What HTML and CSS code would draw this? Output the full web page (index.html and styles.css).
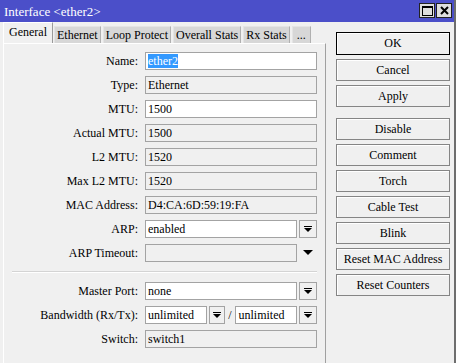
FILE: index.html
```html
<!DOCTYPE html>
<html lang="en">

<head>
    <meta charset="utf-8" />
    <title>Interface &lt;ether2&gt;</title>
    <link rel="stylesheet" href="styles.css">
</head>

<body>
    <div class="window">
        <div class="titlebar">
            <span class="title">Interface &lt;ether2&gt;</span>
            <div class="title-buttons">
                <span class="tbtn">
                    <svg width="11" height="10" viewBox="0 0 11 10"><rect x="0.5" y="0.5" width="10" height="9" fill="none" stroke="#000" /><rect x="0" y="0" width="11" height="2" fill="#000" /></svg>
                </span>
                <span class="tbtn">
                    <svg width="9" height="9" viewBox="0 0 9 9"><path d="M1 1 L8 8 M8 1 L1 8" stroke="#000" stroke-width="2" /></svg>
                </span>
            </div>
        </div>

        <div class="main">
            <div class="left">
                <div class="tabs">
                    <div class="tab active">General</div>
                    <div class="tab">Ethernet</div>
                    <div class="tab">Loop Protect</div>
                    <div class="tab">Overall Stats</div>
                    <div class="tab">Rx Stats</div>
                    <div class="tab more">...</div>
                </div>

                <div class="panel">
                    <div class="form">
                        <label>Name:</label>
                        <div class="field edit"><span class="sel">ether2</span></div>

                        <label>Type:</label>
                        <div class="field">Ethernet</div>

                        <label>MTU:</label>
                        <div class="field edit">1500</div>

                        <label>Actual MTU:</label>
                        <div class="field">1500</div>

                        <label>L2 MTU:</label>
                        <div class="field">1520</div>

                        <label>Max L2 MTU:</label>
                        <div class="field">1520</div>

                        <label>MAC Address:</label>
                        <div class="field">D4:CA:6D:59:19:FA</div>

                        <label>ARP:</label>
                        <div class="combo">
                            <div class="field edit">enabled</div>
                            <span class="drop"><svg width="8" height="7" viewBox="0 0 8 7"><rect x="0" y="0" width="8" height="1" fill="#000" /><path d="M0 2 H8 L4 6 Z" fill="#000" /></svg></span>
                        </div>

                        <label>ARP Timeout:</label>
                        <div class="combo">
                            <div class="field"></div>
                            <span class="arrow"><svg width="10" height="6" viewBox="0 0 10 6"><path d="M0 0 H10 L5 5 Z" fill="#000" /></svg></span>
                        </div>
                    </div>

                    <div class="separator"></div>

                    <div class="form">
                        <label>Master Port:</label>
                        <div class="combo">
                            <div class="field edit">none</div>
                            <span class="drop"><svg width="8" height="7" viewBox="0 0 8 7"><rect x="0" y="0" width="8" height="1" fill="#000" /><path d="M0 2 H8 L4 6 Z" fill="#000" /></svg></span>
                        </div>

                        <label>Bandwidth (Rx/Tx):</label>
                        <div class="bandwidth">
                            <div class="field edit">unlimited</div>
                            <span class="drop small"><svg width="8" height="7" viewBox="0 0 8 7"><rect x="0" y="0" width="8" height="1" fill="#000" /><path d="M0 2 H8 L4 6 Z" fill="#000" /></svg></span>
                            <span class="slash">/</span>
                            <div class="field edit">unlimited</div>
                            <span class="drop"><svg width="8" height="7" viewBox="0 0 8 7"><rect x="0" y="0" width="8" height="1" fill="#000" /><path d="M0 2 H8 L4 6 Z" fill="#000" /></svg></span>
                        </div>

                        <label>Switch:</label>
                        <div class="field">switch1</div>
                    </div>
                </div>
            </div>

            <div class="buttons">
                <button class="default">OK</button>
                <button>Cancel</button>
                <button>Apply</button>
                <button class="spaced">Disable</button>
                <button>Comment</button>
                <button>Torch</button>
                <button>Cable Test</button>
                <button>Blink</button>
                <button>Reset MAC Address</button>
                <button>Reset Counters</button>
            </div>
        </div>
    </div>
</body>

</html>
```

FILE: styles.css
```css
html {
    font-family: "Liberation Serif", "Times New Roman", serif;
    font-size: 12px;
    color: #000;
}

body {
    margin: 0;
    background: #f0f0f0;
}

.window {
    width: 456px;
    height: 363px;
    overflow: hidden;
    background: #f0f0f0;
    box-sizing: border-box;
    border-right: 2px solid #6e6e6e;
}

.titlebar {
    height: 22px;
    background: #4b4fc9;
    display: flex;
    align-items: center;
    justify-content: space-between;
    padding: 0 2px 0 4px;
}

.title {
    color: #fff;
    font-size: 13px;
    padding-top: 1px;
}

.title-buttons {
    display: flex;
    gap: 1px;
    margin-top: -1px;
}

.tbtn {
    width: 14px;
    height: 13px;
    background: #dedede;
    border: 1px solid #222;
    display: flex;
    align-items: center;
    justify-content: center;
}

.main {
    display: flex;
}

.left {
    width: 323px;
    margin-left: 3px;
}

.tabs {
    display: flex;
    align-items: flex-end;
    height: 21px;
    gap: 2px;
}

.tab {
    flex-shrink: 0;
    white-space: nowrap;
    height: 16px;
    line-height: 16px;
    padding: 0 2px;
    background: #d7d7d7;
    border: 1px solid #e4e4e4;
    border-bottom: none;
    border-right-color: #b0b0b0;
}

.tab.active {
    height: 20px;
    line-height: 18px;
    padding: 0 5px;
    background: #f0f0f0;
    border-color: #fff;
    border-right: 1px solid #9a9a9a;
    margin-right: -1px;
}

.tab.more {
    padding: 0 4px;
}

.panel {
    height: 320px;
    box-sizing: border-box;
    border-left: 1px solid #fff;
    border-top: 1px solid #fff;
    border-right: 1px solid #a0a0a0;
    padding: 8px 8px 0 0;
}

.form {
    display: grid;
    grid-template-columns: 134px 172px;
    column-gap: 7px;
    row-gap: 6px;
    align-items: center;
}

.form label {
    text-align: right;
    white-space: nowrap;
    line-height: 14px;
}

.field {
    height: 18px;
    line-height: 16px;
    box-sizing: border-box;
    border: 1px solid #a3a3a3;
    padding: 0 2px;
    white-space: nowrap;
    overflow: hidden;
}

.field.edit {
    background: #fff;
}

.sel {
    background: #3399ff;
    color: #fff;
}

.combo {
    display: flex;
    gap: 2px;
}

.combo .field {
    flex: 1;
}

.drop {
    width: 18px;
    height: 18px;
    box-sizing: border-box;
    border: 1px solid #a3a3a3;
    display: flex;
    align-items: center;
    justify-content: center;
}

.drop.small {
    width: 16px;
}

.arrow {
    width: 18px;
    display: flex;
    align-items: center;
    justify-content: center;
}

.bandwidth {
    display: flex;
    align-items: center;
}

.bandwidth .field {
    width: 62px;
    margin-right: 1px;
}

.bandwidth .field + .drop {
    margin-left: 1px;
}

.slash {
    width: 11px;
    text-align: center;
}

.separator {
    margin: 9px 0 9px 8px;
    border-top: 1px solid #d4d4d4;
    border-bottom: 1px solid #fff;
}

.buttons {
    display: flex;
    flex-direction: column;
    gap: 4px;
    margin: 10px 0 0 10px;
    width: 114px;
}

.buttons button {
    height: 22px;
    margin: 0;
    padding: 0;
    font-family: inherit;
    font-size: 12px;
    color: #000;
    background: #f0f0f0;
    border: 1px solid #858585;
    box-shadow: inset 1px 1px 0 #fff;
}

.buttons button.default {
    border-color: #000;
    height: 23px;
}

.buttons button.spaced {
    margin-top: 7px;
}
```
